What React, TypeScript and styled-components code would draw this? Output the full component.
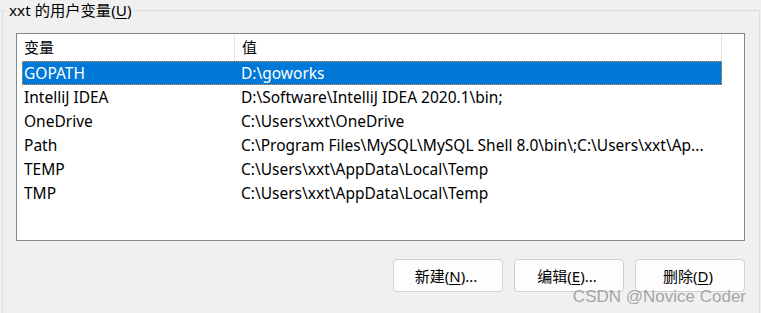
import React from 'react';
import styled, { createGlobalStyle } from 'styled-components';

const GlobalStyle = createGlobalStyle`
  html, body {
    margin: 0;
    padding: 0;
    background: #f0f0f0;
  }
  body {
    font-family: 'Noto Sans', 'Noto Sans CJK SC', sans-serif;
  }
`;

const Window = styled.div`
  position: relative;
  width: 761px;
  height: 313px;
  overflow: hidden;
  background: #f0f0f0;
  padding: 10px 0 0 2px;
  box-sizing: border-box;
`;

const GroupBox = styled.div`
  position: relative;
  width: 758px;
  height: 330px;
  box-sizing: border-box;
  border: 1px solid #dcdcdc;
  padding: 22px 14px 0 13px;
  display: flex;
  flex-direction: column;
`;

const Legend = styled.span`
  position: absolute;
  left: 3px;
  top: -12px;
  padding: 0 2px 0 3px;
  background: #f0f0f0;
  font-size: 15.3px;
  line-height: 22px;
  color: #000;
`;

const Key = styled.u`
  text-decoration: underline;
  text-underline-offset: 2px;
`;

const ListBox = styled.div`
  width: 729px;
  height: 208px;
  box-sizing: border-box;
  border: 1px solid #828790;
  background: #fff;
  display: flex;
  flex-direction: column;
`;

const HeaderRow = styled.div`
  display: flex;
  height: 27px;
  flex-shrink: 0;
`;

const HeaderCell = styled.div<{ $width: number }>`
  width: ${(p) => p.$width}px;
  box-sizing: border-box;
  padding-left: 7px;
  border-right: 1px solid #e5e5e5;
  font-size: 15px;
  line-height: 27px;
  color: #000;
`;

const Rows = styled.div`
  display: flex;
  flex-direction: column;
  padding-left: 5px;
`;

const Row = styled.div<{ $selected?: boolean }>`
  display: flex;
  width: 700px;
  height: 24px;
  box-sizing: border-box;
  background: ${(p) => (p.$selected ? '#0078d7' : 'transparent')};
  color: ${(p) => (p.$selected ? '#fff' : '#000')};
  border: 1px ${(p) => (p.$selected ? 'dotted #e8903a' : 'solid transparent')};
`;

const Cell = styled.div<{ $width?: number }>`
  ${(p) => (p.$width ? `width: ${p.$width}px;` : 'flex: 1;')}
  box-sizing: border-box;
  padding-left: 1px;
  font-size: 15.5px;
  line-height: 22px;
  white-space: nowrap;
  overflow: hidden;
`;

const ButtonRow = styled.div`
  display: flex;
  justify-content: flex-end;
  gap: 11px;
  width: 729px;
  margin-top: 18px;
`;

const Button = styled.button`
  width: 110px;
  height: 33px;
  box-sizing: border-box;
  border: 1px solid #d0d0d0;
  border-radius: 4px;
  background: #fdfdfd;
  font-family: 'Noto Sans', 'Noto Sans CJK SC', sans-serif;
  font-size: 15px;
  color: #000;
  padding: 0 4px 0 0;
  display: flex;
  align-items: center;
  justify-content: center;
`;

const Watermark = styled.div`
  position: absolute;
  right: 15px;
  top: 287px;
  font-family: 'Liberation Sans', Arial, sans-serif;
  font-size: 17px;
  line-height: 20px;
  color: rgba(130, 130, 130, 0.7);
  pointer-events: none;
`;

const vars = [
  { name: 'GOPATH', value: 'D:\\goworks' },
  { name: 'IntelliJ IDEA', value: 'D:\\Software\\IntelliJ IDEA 2020.1\\bin;' },
  { name: 'OneDrive', value: 'C:\\Users\\xxt\\OneDrive' },
  { name: 'Path', value: 'C:\\Program Files\\MySQL\\MySQL Shell 8.0\\bin\\;C:\\Users\\xxt\\Ap...' },
  { name: 'TEMP', value: 'C:\\Users\\xxt\\AppData\\Local\\Temp' },
  { name: 'TMP', value: 'C:\\Users\\xxt\\AppData\\Local\\Temp' },
];

function App() {
  return (
    <Window>
      <GlobalStyle />
      <GroupBox>
        <Legend>
          xxt 的用户变量(<Key>U</Key>)
        </Legend>
        <ListBox>
          <HeaderRow>
            <HeaderCell $width={218}>变量</HeaderCell>
            <HeaderCell $width={487}>值</HeaderCell>
          </HeaderRow>
          <Rows>
            {vars.map((v, i) => (
              <Row key={v.name} $selected={i === 0}>
                <Cell $width={217}>{v.name}</Cell>
                <Cell>{v.value}</Cell>
              </Row>
            ))}
          </Rows>
        </ListBox>
        <ButtonRow>
          <Button>
            新建(<Key>N</Key>)...
          </Button>
          <Button>
            编辑(<Key>E</Key>)...
          </Button>
          <Button>
            删除(<Key>D</Key>)
          </Button>
        </ButtonRow>
      </GroupBox>
      <Watermark>CSDN @Novice Coder</Watermark>
    </Window>
  );
}

export default App;
